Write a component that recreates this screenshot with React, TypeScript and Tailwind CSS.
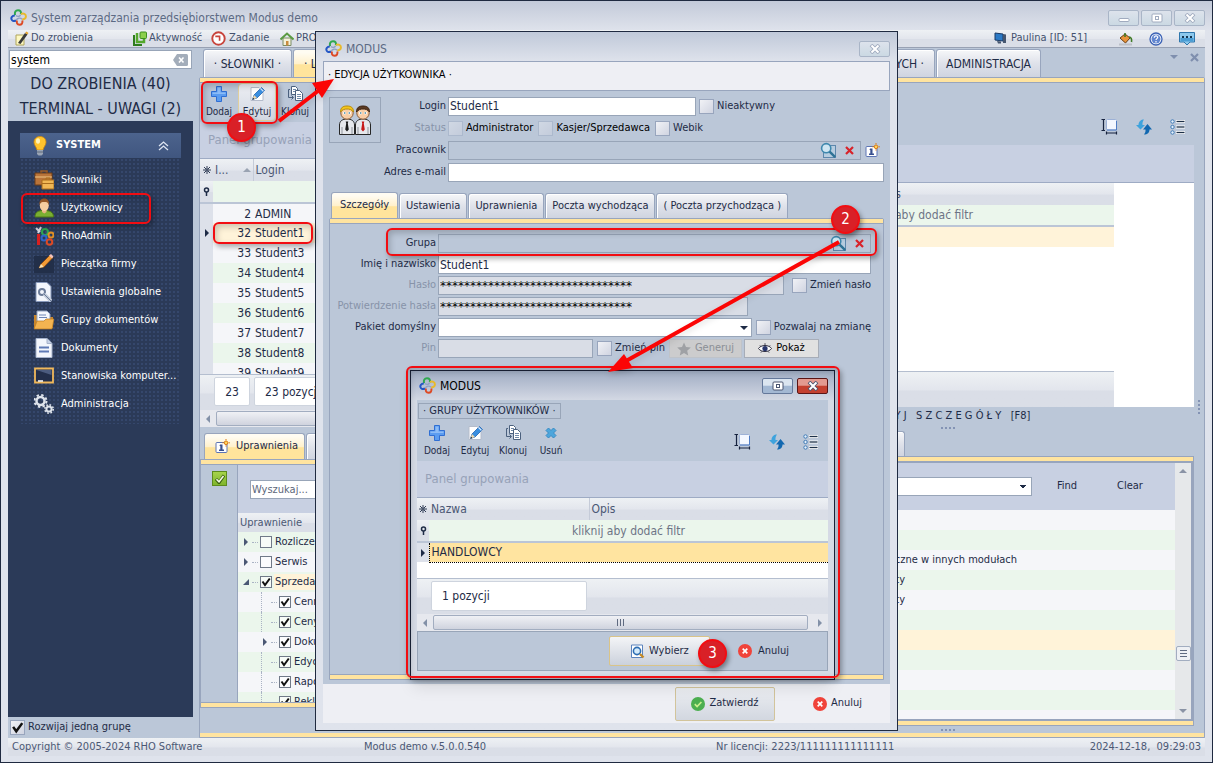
import type { ReactNode } from "react";
import { useId } from "react";
import clsx from "clsx";

const HEAD = "bg-linear-to-b from-[#eef1f4] via-[#e3e6ed] via-50% to-[#dadee7] to-55%";
const TAB = "border border-b-0 border-[#98a5bd] rounded-t-[3px] bg-linear-to-b from-[#f6f7f9] via-[#dfe2ea] to-[#cfd4e0] shadow-[inset_1px_1px_0_#fff]";
const TAB_ACTIVE = "border border-b-0 border-[#98a5bd] rounded-t-[3px] bg-linear-to-b from-[#fffcf2] from-10% via-[#fff1cd] via-50% to-[#ffe49c] to-55%";
const FIELD = "h-[19px] border border-[#98a5b8] px-px text-[12px] outline-none";

/* ---------- icons ---------- */

function Logo() {
  return (
    <svg width="17" height="17" viewBox="0 0 17 17" fill="none" strokeWidth="2" className="shrink-0">
      <path d="M5 6.200C4.500 3 5.500 1.300 8 1.300s3.500 1.500 2.800 3.900" stroke="#2fa84f" />
      <path d="M4.800 6.500C2 6.700.900 8.500 1.500 10.300S4 12.500 6 11.500" stroke="#2457c5" />
      <path d="M11 5c2.500-1 4.800 0 4.900 2.300S14 10.500 12.300 10" stroke="#e8b92c" />
      <path d="M7 11.500c-.8 2.500.3 4.200 2.500 4.200s3.500-1.500 2.800-4.200" stroke="#dd4a25" />
      <path d="M6 6.500c1.500 1.500 3.500 1 4.500-.5M6.500 11c.5-2 4-2.500 5.500-.8" stroke="#8fa0c4" strokeWidth="1.400" />
    </svg>
  );
}

function PlusIcon() {
  return (
    <svg width="18" height="18" viewBox="0 0 18 18">
      <path d="M6.500 1.500h5v5h5v5h-5v5h-5v-5h-5v-5h5z" fill="#5b9cf0" stroke="#2f6ed3" />
      <path d="M7.500 2.500h3v5h5v1.500h-13v-1.500h5z" fill="#a3cbfa" opacity=".7" />
    </svg>
  );
}

function EditIcon() {
  return (
    <svg width="18" height="18" viewBox="0 0 18 18">
      <path d="M3 2.500h8l4 4v9H3z" fill="#fff" stroke="#b5bccb" />
      <path d="M4.500 14.500l1.500-4.500 7.500-7.500 3 3-7.500 7.500z" fill="#3a8fe0" stroke="#2464b0" strokeWidth=".8" />
      <path d="M4.500 14.500l1.500-4.500 3 3z" fill="#f2d9ab" />
      <path d="M4.400 14.700l.8-2 1.200 1.200z" fill="#222" />
      <path d="M12.400 3.400l3 3" stroke="#dbe9fb" strokeWidth="1.300" />
    </svg>
  );
}

function CloneIcon() {
  return (
    <svg width="18" height="18" viewBox="0 0 18 18" fill="none">
      <path d="M5.500 1.500h4l2 2v6h-6z" fill="#fff" stroke="#4b607d" />
      <path d="M7 4.500h3M7 6.500h3" stroke="#7189a8" />
      <path d="M9.500 5.500h4l3 3v7h-7z" fill="#fff" stroke="#4b607d" />
      <path d="M11 9.500h4M11 11.500h4M11 13.500h4" stroke="#7189a8" />
      <path d="M4 4.500H2.500v8H7M5.500 10.500l2 2-2 2" stroke="#4b607d" />
    </svg>
  );
}

function CrossIcon() {
  return (
    <svg width="18" height="18" viewBox="0 0 18 18">
      <path d="M4 6.500L6.500 4 9 6.500 11.500 4 14 6.500 11.500 9l2.500 2.500-2.500 2.500L9 11.500 6.500 14 4 11.500 6.500 9z" fill="#4da6dc" stroke="#388bc4" strokeLinejoin="round" />
    </svg>
  );
}

function SizeIcon() {
  return (
    <svg width="17" height="17" viewBox="0 0 17 17" fill="none">
      <rect x="5.500" y="1.500" width="10" height="10.500" rx="1" fill="#f3f7ff" stroke="#9db1d6" />
      <path d="M6 12h9.500V3" stroke="#4f7cc4" />
      <path d="M.5 1.500h3.500M2.500 1.500v11M.5 12.500h3.500M5.500 13.500v3M15.500 13.500v3M5.500 15h10" stroke="#16233f" strokeWidth="1.200" />
    </svg>
  );
}

function RefreshIcon() {
  return (
    <svg width="16" height="16" viewBox="0 0 16 16">
      <path d="M8 .5C5 .5 2.500 2.500 2.500 6H0l4.500 4.500L9 6H6.500C6.300 4 6.800 2 8 .5z" fill="#3ea3dd" />
      <path d="M8 15.500c3.500 0 5.500-2 5.500-5H16L11.500 5 7 10.500h2.500c.2 2-.3 3.500-1.500 5z" fill="#1268b0" />
    </svg>
  );
}

function ListIcon() {
  return (
    <svg width="16" height="16" viewBox="0 0 16 16" fill="none">
      {[2.5, 8, 13.5].map((y) => (
        <g key={y}>
          <circle cx="2.500" cy={y} r="1.700" fill="#e5f1fc" stroke="#3f7ab5" />
          <path d={`M6 ${y}h9`} stroke="#fff" strokeWidth="3" />
          <path d={`M6.500 ${y}h8`} stroke="#1d3048" strokeWidth="1.300" />
        </g>
      ))}
    </svg>
  );
}

function CardIcon() {
  return (
    <svg width="15" height="15" viewBox="0 0 15 15">
      <rect x="1" y="3.500" width="11" height="10" rx="1" fill="#fff" stroke="#5c74b5" />
      <path d="M5 5.500h2.500v5H9v1.500H4v-1.500h1.300V7H4.500z" fill="#39508f" />
      <circle cx="11" cy="3.800" r="1.800" fill="#ffd45b" stroke="#dd7b13" />
      <path d="M11 0v1.300M11 6.300v1.300M7.300 3.800h1.200M13.500 3.800h1.400" stroke="#dd7b13" />
    </svg>
  );
}

function LookupIcon() {
  return (
    <svg width="17" height="17" viewBox="0 0 17 17" fill="none">
      <rect x="3.500" y="3.500" width="12" height="12" fill="#b7cde0" stroke="#5d87ac" />
      <circle cx="6.200" cy="6.200" r="4.600" fill="#cfe6f3" stroke="#3f88ae" strokeWidth="1.600" />
      <path d="M9.600 9.600l5.600 5.600" stroke="#2f7396" strokeWidth="2.400" />
    </svg>
  );
}

function RedX() {
  return (
    <svg width="9" height="9" viewBox="0 0 9 9">
      <path d="M1 1l7 7M8 1l-7 7" stroke="#d8232a" strokeWidth="2.200" />
    </svg>
  );
}

function CancelIcon() {
  return (
    <svg width="14" height="14" viewBox="0 0 14 14">
      <circle cx="7" cy="7" r="7" fill="#f0433a" />
      <path d="M4.700 4.700l4.600 4.600M9.300 4.700l-4.600 4.600" stroke="#fff" strokeWidth="1.700" />
    </svg>
  );
}

function OkIcon() {
  return (
    <svg width="14" height="14" viewBox="0 0 14 14">
      <circle cx="7" cy="7" r="7" fill="#4caf50" />
      <path d="M3.800 7.200l2.300 2.300 4.300-4.500" fill="none" stroke="#c9f08e" strokeWidth="1.700" />
    </svg>
  );
}

function UsersIcon() {
  return (
    <svg width="34" height="34" viewBox="0 0 34 34">
      {[0, 16].map((x) => (
        <g key={x} transform={`translate(${x} 2)`}>
          <path d="M1.500 29.500V20c0-4 3-6 7.500-6s7.500 2 7.500 6v9.500z" fill="#e6e8ec" stroke="#262626" />
          <circle cx="9" cy="8" r="6.200" fill="#f9cfa8" stroke="#8d5c36" />
          <path d="M2.500 7C2.500 2.500 5 1 9 1s6.500 1.500 6.500 6c-2-2.500-4-3-6.500-3s-4.500.5-6.500 3z" fill={x ? "#5b3a22" : "#f3c51c"} stroke={x ? "#3d2515" : "#b78b0b"} />
          <circle cx="6.500" cy="8" r="1.500" fill="#fff" />
          <circle cx="11.500" cy="8" r="1.500" fill="#fff" />
          <circle cx="6.700" cy="8" r=".8" fill="#1d6d8c" />
          <circle cx="11.300" cy="8" r=".8" fill="#1d6d8c" />
          <path d="M7.700 16.500h2.600l-.5 2 1 6-1.800 2-1.800-2 1-6z" fill={x ? "#c61a1a" : "#1c1c1c"} />
          <path d="M4 29v-7M14 29v-7" stroke="#8f949c" />
        </g>
      ))}
    </svg>
  );
}

function BulbIcon() {
  return (
    <svg width="16" height="20" viewBox="0 0 16 20">
      <path d="M8 .5c4 0 6 2.600 6 5.800 0 3-2.500 4.700-3 7.700H5c-.5-3-3-4.700-3-7.700C2 3.100 4 .5 8 .5z" fill="#ffc32d" stroke="#c98711" strokeWidth=".8" />
      <ellipse cx="6" cy="5" rx="2" ry="2.800" fill="#fff3b8" />
      <path d="M5 14h6v4l-1.500 1.500h-3L5 18z" fill="#9aa5b5" />
      <path d="M5 16h6" stroke="#5f6b7c" />
    </svg>
  );
}

const navIcons: Record<string, ReactNode> = {
  case: (
    <>
      <path d="M7 3V1h6v2" fill="none" stroke="#9d5b22" strokeWidth="1.500" />
      <path d="M1 3h17v12H1z" fill="#b9743a" stroke="#6d3d16" />
      <path d="M1 7h17" stroke="#f0c684" />
      <path d="M8 10h12v9H8z" fill="#f0b755" stroke="#a96c1b" />
      <path d="M12 9.500v-1.500h4v1.500M8 13.500h12" fill="none" stroke="#a96c1b" />
    </>
  ),
  user: (
    <>
      <path d="M1 19c0-5 3-6.500 9-6.500s9.500 1.500 9.500 6.500z" fill="#7ab032" stroke="#4e7a16" />
      <path d="M8 11h4.500v3l-2.200 1.500L8 14z" fill="#e9b583" />
      <ellipse cx="10.300" cy="7.500" rx="4.500" ry="5.500" fill="#f6cda0" />
      <path d="M5.500 7c-.5-4 1.500-6.500 4.800-6.500S15.500 3 15 7c-1-2.500-2-3-4.700-3S6.500 4.500 5.500 7z" fill="#9a5a2a" />
    </>
  ),
  admin: (
    <>
      <path d="M2 2l4 4M7 1L4 7" stroke="#d5dae3" strokeWidth="2" />
      <path d="M3 8h3v11H3z" fill="#d82020" />
      <circle cx="11" cy="6" r="3" fill="none" stroke="#2fa84f" strokeWidth="2" />
      <circle cx="17" cy="9" r="2.500" fill="none" stroke="#e08f25" strokeWidth="2" />
      <circle cx="10" cy="12" r="2.500" fill="none" stroke="#2f66c9" strokeWidth="2" />
      <circle cx="15.500" cy="16" r="2.800" fill="none" stroke="#dd4a25" strokeWidth="2" />
    </>
  ),
  stamp: (
    <>
      <path d="M0 2h20v17H0z" fill="#222f49" />
      <path d="M5 14l2-4L16 1l3 2.500-9 9.500z" fill="#f39b35" stroke="#7d4310" strokeWidth=".8" />
      <path d="M5 14l2-4 2.800 3z" fill="#fbe3b3" />
      <path d="M15 1.500l2-1.500 2.500 2.500-1.500 2z" fill="#f3c4bd" />
    </>
  ),
  globalSettings: (
    <>
      <path d="M2 .5h11l4 4v15H2z" fill="#f3f6fc" stroke="#8798ba" />
      <circle cx="8" cy="10" r="3" fill="none" stroke="#6c7c98" strokeWidth="2" />
      <path d="M10 12l7 7" stroke="#c3ccda" strokeWidth="3.500" />
      <path d="M10 12l7 7" stroke="#6c7c98" strokeWidth="1" />
    </>
  ),
  folder: (
    <>
      <path d="M0 5h8l2 2h9v11H0z" fill="#c9862b" />
      <path d="M3 1h10l3 3v9H3z" fill="#f5f8fd" stroke="#8fa0c0" />
      <path d="M5 5h7M5 7.500h8" stroke="#6f86b5" />
      <path d="M0 19l3-8h7l2-2h8l-2 10z" fill="#f3b451" stroke="#b97a1f" strokeWidth=".7" />
    </>
  ),
  doc: (
    <>
      <path d="M2 .5h11l5 5v14H2z" fill="#f3f6fc" stroke="#a5b2cb" />
      <path d="M13 .5v5h5" fill="#c7d2e6" stroke="#a5b2cb" />
      <path d="M5 9.500h10M5 13.500h10" stroke="#5f7ab5" strokeWidth="2" />
    </>
  ),
  board: (
    <>
      <path d="M1 2.500h18v14H1z" fill="#232f4b" stroke="#f0b85b" strokeWidth="1.800" />
      <path d="M2.500 4h15v5z" fill="#4c5c7f" />
      <path d="M4 15h5" stroke="#fff" strokeWidth="1.500" />
    </>
  ),
  gears: (
    <>
      <circle cx="6.500" cy="7" r="4" fill="none" stroke="#dfe4ec" strokeWidth="2.500" />
      <circle cx="6.500" cy="7" r="6" fill="none" stroke="#dfe4ec" strokeWidth="2" strokeDasharray="2.360 2.360" />
      <circle cx="15" cy="15" r="2.600" fill="none" stroke="#dfe4ec" strokeWidth="2" />
      <circle cx="15" cy="15" r="4.200" fill="none" stroke="#dfe4ec" strokeWidth="1.600" strokeDasharray="1.650 1.650" />
    </>
  ),
};

/* ---------- shared controls ---------- */

type CheckProps = { label: string; checked?: boolean; disabled?: boolean; small?: boolean; bold?: boolean };

function Check({ label, checked, disabled, small, bold }: CheckProps) {
  const id = useId();
  return (
    <span className="flex items-center gap-[3px] whitespace-nowrap">
      <span className="relative flex">
        <input
          id={id}
          type="checkbox"
          defaultChecked={checked}
          disabled={disabled}
          className={clsx(
            "peer appearance-none border",
            small ? "size-3 border-[#707988] bg-white/60" : "size-[15px] border-[#98a5bd] bg-linear-to-br from-[#f1f2f6] to-[#d0d4e1]",
            disabled && "opacity-40",
          )}
        />
        <svg viewBox="0 0 12 12" className="pointer-events-none absolute inset-0 m-auto hidden size-full peer-checked:block">
          <path d="M2.500 5.500l2.500 3.500 4.800-6.500" fill="none" stroke="#111" strokeWidth="2" />
        </svg>
      </span>
      <label htmlFor={id} className={bold ? "text-black" : ""}>{label}</label>
    </span>
  );
}

function ToolButton({ icon, label, active }: { icon: ReactNode; label: string; active?: boolean }) {
  return (
    <button
      className={clsx(
        "flex h-[38px] w-[38px] flex-col items-center justify-between rounded-sm border pt-px text-[10px] leading-4",
        active ? "border-[#e0cf9e] bg-linear-to-b from-[#eceef3] to-[#d3d8e2]" : "border-transparent",
      )}
    >
      {icon}
      {label}
    </button>
  );
}

function ViewTools() {
  return (
    <div className="flex items-center gap-[18px]">
      <button aria-label="Rozmiar"><SizeIcon /></button>
      <button aria-label="Odśwież"><RefreshIcon /></button>
      <button aria-label="Lista"><ListIcon /></button>
    </div>
  );
}

function WinButton({ kind, tone = "dim" }: { kind: "min" | "max" | "close"; tone?: "dim" | "blue" | "red" }) {
  return (
    <button
      aria-label={kind}
      className={clsx(
        "flex h-4 w-[31px] items-center justify-center rounded-xs border",
        tone === "dim" && "border-[#a9b5c7] bg-linear-to-b from-[#dde3ec] to-[#cbd9e3]",
        tone === "blue" && "border-[#64789a] bg-linear-to-b from-[#dbe5f0] from-45% to-[#a3b8d3] to-50%",
        tone === "red" && "border-[#5b1515] bg-linear-to-b from-[#e39a90] from-45% to-[#c4402f] to-50%",
      )}
    >
      <svg width="12" height="10" viewBox="0 0 12 10" fill="none" stroke={tone === "dim" ? "#a0abbf" : "#4a5570"}>
        {kind === "min" && <rect x="1" y="5.500" width="10" height="3" rx="1" fill="#fff" />}
        {kind === "max" && (
          <>
            <rect x="1" y="1" width="10" height="8" rx="1" fill="#fff" />
            <rect x="4.500" y="3.500" width="3" height="3" />
          </>
        )}
        {kind === "close" && (
          <>
            <path d="M2 1l8 8M10 1L2 9" strokeWidth="3.800" />
            <path d="M2.500 1.500l7 7M9.500 1.500l-7 7" stroke="#fff" strokeWidth="2" />
          </>
        )}
      </svg>
    </button>
  );
}

function Tri({ dir, className }: { dir: "left" | "right" | "up" | "down"; className?: string }) {
  const d = { left: "M6 0v8L2 4z", right: "M2 0v8l4-4z", up: "M0 6h8L4 2z", down: "M0 2h8L4 6z" }[dir];
  return (
    <svg width="8" height="8" viewBox="0 0 8 8" className={clsx("shrink-0", className)}>
      <path d={d} fill="currentColor" />
    </svg>
  );
}

function FilterPin() {
  return (
    <svg width="7" height="9" viewBox="0 0 7 9" className="mx-auto">
      <circle cx="3.500" cy="3" r="2" fill="none" stroke="#1e2b46" strokeWidth="1.500" />
      <path d="M3.500 5v4" stroke="#1e2b46" strokeWidth="1.500" />
    </svg>
  );
}

function StarMark() {
  return (
    <svg width="8" height="8" viewBox="0 0 8 8" className="mx-auto" stroke="#1e2b46" strokeWidth=".9">
      <path d="M4 0v8M0 4h8M1 1l6 6M7 1L1 7" />
      <circle cx="4" cy="4" r="1" fill="#e6e9ef" />
    </svg>
  );
}

function HScroll() {
  return (
    <div className="flex h-[17px] items-center gap-1 bg-[#e6e8ee] px-1 text-[#8391a8]">
      <Tri dir="left" />
      <div className="flex h-[15px] flex-1 items-center justify-center gap-0.5 rounded-xs border border-[#a2adc0] bg-linear-to-b from-[#f0f1f5] to-[#cfd3de]">
        {[0, 1, 2].map((i) => (
          <span key={i} className="h-[7px] w-px bg-[#5f6a80]" />
        ))}
      </div>
      <Tri dir="right" className="ml-1" />
    </div>
  );
}

function Dots({ vertical }: { vertical?: boolean }) {
  return (
    <div className={clsx("flex gap-0.5", vertical && "flex-col")}>
      {[0, 1, 2, 3].map((i) => (
        <span key={i} className="size-0.5 bg-[#8393b4]" />
      ))}
    </div>
  );
}

/* ---------- main window ---------- */

function TopBar() {
  return (
    <header>
      <div className="flex h-[29px] items-center gap-1 pt-1 pl-0.5 text-[#5c6a84]">
        <Logo />
        <h1 className="flex-1 text-[12px]">System zarządzania przedsiębiorstwem Modus demo</h1>
        <div className="flex gap-0.5">
          <WinButton kind="min" />
          <WinButton kind="max" />
          <WinButton kind="close" />
        </div>
      </div>
      <div className={clsx("flex h-[18px] items-center border-b border-[#98a1b3] text-[#44526e]", HEAD)}>
        <button className="flex w-[119px] items-center gap-0.5 pl-1.5">
          <svg width="15" height="15" viewBox="0 0 15 15">
            <path d="M2 4h8v10H2z" fill="#fdf8c2" stroke="#b0a55b" />
            <path d="M4 12L11 2l2.500 1.500L6.500 13z" fill="#3a3a3a" />
            <path d="M11 2l1.500-1.500L14.500 2l-1 1.500z" fill="#e7a52c" />
          </svg>
          Do zrobienia
        </button>
        <button className="flex w-[78px] items-center gap-0.5 pl-1.5">
          <svg width="14" height="15" viewBox="0 0 14 15" className="shrink-0">
            <path d="M1 4v10h8" fill="none" stroke="#2e7d1d" strokeWidth="2" />
            <path d="M4 2v9h7V7" fill="none" stroke="#54a82c" strokeWidth="2.500" />
            <rect x="7" y="1" width="6.500" height="6.500" rx="1" fill="#8ccf4d" stroke="#3d8f1f" />
          </svg>
          Aktywność
        </button>
        <button className="flex w-[69px] items-center gap-[3px] pl-1.5">
          <svg width="15" height="15" viewBox="0 0 14 14" className="shrink-0">
            <circle cx="7" cy="7" r="5.800" fill="#fff" stroke="#c8443c" strokeWidth="1.800" />
            <path d="M4 5h4v4" fill="none" stroke="#c8443c" strokeWidth="1.500" />
          </svg>
          Zadanie
        </button>
        <button className="flex items-center gap-0.5 pl-1.5">
          <svg width="14" height="14" viewBox="0 0 14 14">
            <path d="M3 6h8v7.500H3z" fill="#f4f1d8" stroke="#7a8c66" />
            <path d="M.5 7.500L7 1.500l6.500 6" fill="none" stroke="#5b9a42" strokeWidth="2" />
            <path d="M6 9h2.500v4.500H6z" fill="#c98b3f" />
          </svg>
          PRO
        </button>
        <div className="flex-1" />
        <button className="flex w-[112px] items-center gap-1">
          <svg width="13" height="13" viewBox="0 0 13 13">
            <path d="M1 1l8 1v7L1 8z" fill="#2c7ac6" stroke="#1a3a66" />
            <path d="M9 2l3 .5V11H9zM3 9l4 .5v2H4z" fill="#46566f" />
          </svg>
          Paulina [ID: 51]
        </button>
        <div className="flex gap-4 pr-2.5 pl-3">
          <button aria-label="Kolor">
            <svg width="15" height="14" viewBox="0 0 15 14">
              <path d="M2 6l5-4 5 4-4.500 5z" fill="#e8933a" stroke="#6b3d12" />
              <path d="M7 1v4M11 5c2 0 3 2 2.500 5" fill="none" stroke="#3f7a26" strokeWidth="1.600" />
              <path d="M1 12.500h13" stroke="#bcc0c8" strokeWidth="2" />
            </svg>
          </button>
          <button aria-label="Pomoc">
            <svg width="14" height="14" viewBox="0 0 14 14" fill="none">
              <circle cx="7" cy="7" r="6" fill="#fff" stroke="#3b62b5" strokeWidth="1.300" />
              <circle cx="7" cy="7" r="4.500" fill="#6286cf" />
              <path d="M5.300 5.800c0-2.600 3.600-2.300 3.400-.3-.1 1.100-1.700 1.200-1.700 2.600M7 9v1.500" stroke="#fff" strokeWidth="1.200" />
            </svg>
          </button>
          <button aria-label="Wiadomości">
            <svg width="16" height="14" viewBox="0 0 16 14">
              <path d="M.5.500h15v9.500H11l-3 3-3-3H.5z" fill="#8cc8ec" stroke="#2f77ad" />
              <path d="M1.500 6h13v3.500h-13z" fill="#4b9dd4" />
              <path d="M3 5h2M7 5h2M11 5h2" stroke="#14344f" strokeWidth="2" />
            </svg>
          </button>
        </div>
      </div>
    </header>
  );
}

const navItems = [
  { icon: "case", label: "Słowniki" },
  { icon: "user", label: "Użytkownicy" },
  { icon: "admin", label: "RhoAdmin" },
  { icon: "stamp", label: "Pieczątka firmy" },
  { icon: "globalSettings", label: "Ustawienia globalne" },
  { icon: "folder", label: "Grupy dokumentów" },
  { icon: "doc", label: "Dokumenty" },
  { icon: "board", label: "Stanowiska komputer..." },
  { icon: "gears", label: "Administracja" },
];

function Sidebar() {
  return (
    <aside className="flex w-[185px] shrink-0 flex-col">
      <div className="relative mx-px mt-0.5 flex">
        <input aria-label="Szukaj w menu" defaultValue="system" className={clsx(FIELD, "w-full bg-white text-black")} />
        <button aria-label="Wyczyść" className="absolute top-1 right-1">
          <svg width="15" height="12" viewBox="0 0 15 12">
            <path d="M0 6l4-6h9.500q1.500 0 1.500 1.500v9q0 1.500-1.500 1.500H4z" fill="#a3adba" />
            <path d="M6 3.500l4.500 5M10.500 3.500l-4.500 5" stroke="#fff" strokeWidth="1.600" />
          </svg>
        </button>
      </div>
      <div className="flex flex-col pt-0.5 text-center text-base leading-[25px]">
        <a href="#todo">DO ZROBIENIA (40)</a>
        <a href="#terminal">TERMINAL - UWAGI (2)</a>
      </div>
      <nav className="flex-1 bg-[#2b3a58] px-3 pt-3">
        <button className="flex h-[25px] w-full items-center bg-linear-to-b from-[#4c638d] to-[#40567f] px-3 font-bold text-white">
          <BulbIcon />
          <span className="ml-2 flex-1 text-left">SYSTEM</span>
          <svg width="11" height="10" viewBox="0 0 11 10" fill="none" stroke="#dfe6f3" strokeWidth="1.300">
            <path d="M1 5l4.500-4L10 5M1 9l4.500-4L10 9" />
          </svg>
        </button>
        <ul className="bg-[radial-gradient(#35476c_1px,transparent_1px)] bg-size-[4px_4px] pt-2 pb-1.5 text-white">
          {navItems.map((item) => (
            <li key={item.label}>
              <a href={`#${item.icon}`} className="flex h-7 items-center gap-[7px] pl-3.5 whitespace-nowrap">
                <svg width="20" height="20" viewBox="0 0 20 20" className="shrink-0">
                  {navIcons[item.icon]}
                </svg>
                {item.label}
              </a>
            </li>
          ))}
        </ul>
      </nav>
      <div className="flex h-[21px] items-center pl-0.5">
        <Check label="Rozwijaj jedną grupę" checked />
      </div>
    </aside>
  );
}

const logins = [
  [2, "ADMIN"],
  [32, "Student1"],
  [33, "Student3"],
  [34, "Student4"],
  [35, "Student5"],
  [36, "Student6"],
  [37, "Student7"],
  [38, "Student8"],
  [39, "Student9"],
];

const permissions = [
  { label: "Rozliczenia", arrow: "right", level: 0, checked: false },
  { label: "Serwis", arrow: "right", level: 0, checked: false },
  { label: "Sprzedaż", arrow: "open", level: 0, checked: true },
  { label: "Cennik", level: 1, checked: true },
  { label: "Ceny", level: 1, checked: true },
  { label: "Dokumenty", arrow: "right", level: 1, checked: true },
  { label: "Edycja", level: 1, checked: true },
  { label: "Raporty", level: 1, checked: true },
  { label: "Reklamacje", level: 1, checked: true },
];

function UsersPane() {
  return (
    <section className="flex min-w-0 flex-1 flex-col">
      <div className="flex h-[39px] items-start">
        <ToolButton icon={<PlusIcon />} label="Dodaj" />
        <ToolButton icon={<EditIcon />} label="Edytuj" active />
        <ToolButton icon={<CloneIcon />} label="Klonuj" />
      </div>
      <p className="h-9 bg-[#c8d0e2] pl-2 text-[13px] leading-9 text-[#97a2b8]">Panel grupowania</p>
      <div className="h-[216px] overflow-hidden border-t border-[#9eabc4] bg-white">
        <table className="w-full table-fixed text-[12px]">
          <colgroup>
            <col className="w-[13px]" />
            <col className="w-10" />
            <col />
          </colgroup>
          <thead>
            <tr className={clsx("h-[22px] text-left text-[#4b5874]", HEAD)}>
              <th><StarMark /></th>
              <th className="font-normal">
                <span className="flex items-center justify-between px-0.5">
                  I... <Tri dir="up" className="text-[#9aa3b2]" />
                </span>
              </th>
              <th className="border-l border-[#c5cbd8] pl-0.5 font-normal">Login</th>
            </tr>
            <tr className="h-[22px] border-b-2 border-[#bbc5d6] bg-[#ebf6ec]">
              <td className={HEAD}><FilterPin /></td>
              <td colSpan={2} />
            </tr>
          </thead>
          <tbody>
            {logins.map(([id, name], i) => (
              <tr key={id} className={clsx("h-5", i === 1 ? "bg-[#fff3d9]" : i > 1 && i % 2 ? "bg-[#ebf6ec]" : "bg-[#f5f6f9]")}>
                <td className="bg-[#dde1ea]">{i === 1 && <Tri dir="right" className="mx-auto" />}</td>
                <td className="pr-0.5 text-right">{id}</td>
                <td className="pl-0.5">{name}</td>
              </tr>
            ))}
          </tbody>
        </table>
      </div>
      <div className={clsx("flex h-9 gap-1 border-t border-[#b4becf] px-3.5 pt-0.5 text-[12px] whitespace-nowrap", HEAD)}>
        <span className="flex h-[29px] w-9 items-center justify-center rounded-xs border border-[#ced4de] bg-white">23</span>
        <span className="flex h-[29px] w-40 items-center rounded-xs border border-[#ced4de] bg-white pl-2.5">23 pozycji</span>
      </div>
      <HScroll />
      <div className="mt-1.5 flex h-[26px] gap-px pl-1">
        <button className={clsx("flex w-[101px] items-center gap-1.5 pl-2.5", TAB_ACTIVE)}>
          <CardIcon /> Uprawnienia
        </button>
        <button className={clsx("w-24 pl-2 text-left", TAB)}>( Role )</button>
      </div>
      <div className="flex min-h-0 flex-1 flex-col border border-[#98a5bd]">
        <div className="h-1 bg-[#ffe4a0]" />
        <div className="flex min-h-0 flex-1 border-y border-[#98a5bd]">
          <div className="w-9 pt-1.5 pl-[11px]">
            <button aria-label="Zaznacz wszystko" className="flex size-[15px] items-center justify-center border border-[#5d8c1e] bg-linear-to-b from-[#a6d34b] to-[#7fb52c]">
              <svg width="10" height="10" viewBox="0 0 10 10" fill="none">
                <path d="M1 5l3 3.500L9 1.500" stroke="#3b6112" strokeWidth="3.200" />
                <path d="M1.500 5.200l2.500 2.500L8.500 2" stroke="#f4fbe4" strokeWidth="1.600" />
              </svg>
            </button>
          </div>
          <div className="min-w-0 flex-1 overflow-hidden border-l border-[#98a5bd]">
            <div className="flex h-12 items-center bg-[#c8d0e2] pl-3">
              <input aria-label="Wyszukaj" placeholder="Wyszukaj..." className={clsx(FIELD, "w-52 bg-white placeholder:text-[11px] placeholder:text-[#5c667a]")} />
            </div>
            <div className={clsx("h-[19px] pl-0.5 leading-[19px] text-[#4b5874]", HEAD)}>Uprawnienie</div>
            <ul>
              {permissions.map((p, i) => (
                <li key={p.label} className={clsx("flex h-5 items-center gap-1.5 pl-1", i % 2 ? "bg-[#f5f6f9]" : "bg-[#ebf6ec]", p.level === 1 && "pl-[23px]")}>
                  {p.arrow === "right" && <Tri dir="right" className="text-[#4b5874]" />}
                  {p.arrow === "open" && (
                    <svg width="8" height="8" viewBox="0 0 8 8"><path d="M7 1v6H1z" fill="#4b5874" /></svg>
                  )}
                  {!p.arrow && <span className="h-5 w-2 border-l border-dotted border-[#aab3c4]" />}
                  <span className="-mx-1 w-1.5 border-t border-dotted border-[#aab3c4]" />
                  <span className={clsx("flex-1", p.arrow === "open" && "bg-linear-to-r from-transparent from-[14px] to-[#fff3d9] to-[14px]")}>
                    <Check label={p.label} checked={p.checked} small />
                  </span>
                </li>
              ))}
            </ul>
          </div>
        </div>
        <div className="h-1 bg-[#ffe4a0]" />
      </div>
      <div className="h-[25px]" />
    </section>
  );
}

const detailRows = ["", "", "Operacje zbiorcze, widoczne w innych modułach", "Dokumenty", "Raporty", "", "", "", "", "", ""];

function DetailsPane() {
  return (
    <section className="flex min-w-0 flex-1 flex-col pl-2">
      <div className="flex h-[62px] items-end justify-end pr-2 pb-2.5">
        <ViewTools />
      </div>
      <div className="h-[37px] bg-[#c8d0e2]" />
      <div className="flex h-[225px] border-t border-[#9eabc4] bg-white">
        <div className="flex flex-1 flex-col text-[12px]">
          <div className={clsx("h-[22px] leading-[22px] text-[#4b5874]", HEAD)}>
            <span className="block w-[200px] text-right">Opis</span>
          </div>
          <div className="h-[22px] border-b-2 border-[#bbc5d6] bg-[#ebf6ec] leading-5 text-[#6d7486]">
            <span className="block w-[272px] text-right">kliknij aby dodać filtr</span>
          </div>
          <div className="h-5 bg-[#fff3d9]" />
          <div className="flex-1" />
          <div className={clsx("h-9 border-t border-[#b4becf]", HEAD)} />
        </div>
        <div className="w-20" />
      </div>
      <div className="flex h-6 flex-col items-center gap-0.5 pt-px">
        <p className="whitespace-pre">{"U K R Y J   S Z C Z E G Ó Ł Y   [F8]"}</p>
        <Dots />
      </div>
      <div className="flex h-[25px]">
        <button aria-label="Role" className={clsx("w-[204px]", TAB)} />
      </div>
      <div className="flex min-h-0 flex-1 flex-col border border-[#98a5bd]">
        <div className="h-1 bg-[#ffe4a0]" />
        <div className="flex min-h-0 flex-1 border-2 border-[#98a5bd]">
          <div className="min-w-0 flex-1 overflow-hidden">
            <div className="flex h-[47px] items-center justify-end bg-[#c8d0e2] pr-[17px]">
              <select aria-label="Szukaj" className="h-[19px] w-72 appearance-none border border-[#98a5b8] bg-white bg-[linear-gradient(45deg,transparent_50%,#1e2b46_50%),linear-gradient(-45deg,transparent_50%,#1e2b46_50%)] bg-size-[4px_4px] bg-position-[right_8px_center,right_4px_center] bg-no-repeat" />
              <button className="w-[70px]">Find</button>
              <button className="w-14">Clear</button>
            </div>
            <ul>
              {detailRows.map((text, i) => (
                <li key={i} className={clsx("h-5 leading-5 whitespace-nowrap", i === 6 ? "bg-[#fff3d9]" : i % 2 ? "bg-[#ebf6ec]" : "bg-[#f5f6f9]")}>
                  <span className={clsx("block text-right", i === 2 ? "w-[313px]" : "w-[201px]")}>{text}</span>
                </li>
              ))}
            </ul>
          </div>
          <div className="flex w-4 flex-col items-center justify-between bg-[#e6e8ea] py-1 text-[#8a93a5]">
            <Tri dir="up" />
            <div className="flex-1" />
            <div className="flex size-[15px] flex-col items-center justify-center gap-0.5 rounded-xs border border-[#a2adc0] bg-[#eef0f4]">
              {[0, 1, 2].map((i) => (
                <span key={i} className="h-px w-[7px] bg-[#5f6a80]" />
              ))}
            </div>
            <div className="h-[46px]" />
            <Tri dir="down" />
          </div>
        </div>
        <div className="h-1 bg-[#ffe4a0]" />
      </div>
      <div className="flex h-[7px] items-center justify-center"><Dots /></div>
    </section>
  );
}

function Workspace() {
  return (
    <main className="flex min-w-0 flex-1 flex-col">
      <div className="flex h-[29px] items-stretch gap-px pt-px pl-1 text-[12px] whitespace-nowrap">
        <button className={clsx("w-[89px]", TAB)}>· SŁOWNIKI ·</button>
        <button className={clsx("w-[300px] pl-2.5 text-left", TAB_ACTIVE)}>· LOGINY ·</button>
        <button className={clsx("w-[341px] pr-2.5 text-right", TAB)}>· LISTA DANYCH ·</button>
        <button className={clsx("w-[105px]", TAB)}>ADMINISTRACJA</button>
        <div className="flex flex-1 items-start justify-end gap-3 pt-1 pr-1.5 text-[#7f8fae]">
          <Tri dir="down" />
          <svg width="9" height="9" viewBox="0 0 9 9"><path d="M1 1l7 7M8 1l-7 7" stroke="currentColor" strokeWidth="2.200" /></svg>
        </div>
      </div>
      <div className="flex min-h-0 flex-1 flex-col rounded-t-xs border border-[#98a5bd]">
        <div className="h-1 bg-[#ffe4a0]" />
        <div className="flex min-h-0 flex-1 border-t border-[#98a5bd]">
          <UsersPane />
          <DetailsPane />
          <div className="flex w-[10px] justify-center pt-[317px]"><Dots vertical /></div>
        </div>
        <div className="h-1 bg-[#ffe4a0]" />
      </div>
    </main>
  );
}

/* ---------- edit dialog ---------- */

type RowProps = { label: string; dim?: boolean; wide?: boolean; children: (id: string) => ReactNode };

function FormRow({ label, dim, wide, children }: RowProps) {
  const id = useId();
  return (
    <div className={clsx("flex items-center", wide ? "h-[22px]" : "h-[21px]")}>
      <label htmlFor={id} className={clsx("shrink-0 pr-0.5 text-right whitespace-nowrap", wide ? "w-[67px]" : "w-[108px]", dim && "text-[#8793a9]")}>
        {label}
      </label>
      {children(id)}
    </div>
  );
}

function Lookup({ id }: { id: string }) {
  return (
    <div className="flex h-[19px] flex-1 items-center gap-2 border border-[#98a5b8] pr-1.5">
      <input id={id} readOnly className="min-w-0 flex-1 bg-transparent outline-none" />
      <button aria-label="Wybierz z listy"><LookupIcon /></button>
      <button aria-label="Usuń"><RedX /></button>
    </div>
  );
}

function GroupsDialog() {
  return (
    <div role="dialog" aria-label="Grupy użytkowników" className="absolute top-[369px] left-[409px] flex w-[425px] flex-col border border-[#1a2238] bg-linear-to-b from-[#a0acc3] to-[#d5dae5] to-[30px] px-1.5 pb-2 shadow-lg">
      <div className="flex h-[29px] items-center gap-1 pl-0.5 text-black">
        <Logo />
        <h2 className="flex-1 text-[12px]">MODUS</h2>
        <WinButton kind="max" tone="blue" />
        <WinButton kind="close" tone="red" />
      </div>
      <div className="bg-[#bbc7d8] px-px pt-[3px]">
        <h3 className="flex h-4 w-fit items-center border border-[#98a5b8] px-1">· GRUPY UŻYTKOWNIKÓW ·</h3>
        <div className="flex h-[42px] items-start justify-between pt-[3px] pr-2">
          <div className="flex">
            <ToolButton icon={<PlusIcon />} label="Dodaj" />
            <ToolButton icon={<EditIcon />} label="Edytuj" />
            <ToolButton icon={<CloneIcon />} label="Klonuj" />
            <ToolButton icon={<CrossIcon />} label="Usuń" />
          </div>
          <div className="self-center"><ViewTools /></div>
        </div>
      </div>
      <p className="h-9 bg-[#c8d0e2] pl-2 text-[13px] leading-9 text-[#97a2b8]">Panel grupowania</p>
      <div className="h-[81px] border-t border-[#9eabc4] bg-white">
        <table className="w-full table-fixed text-[12px]">
          <colgroup>
            <col className="w-3" />
            <col className="w-40" />
            <col />
          </colgroup>
          <thead>
            <tr className={clsx("h-[22px] text-left text-[#4b5874]", HEAD)}>
              <th><StarMark /></th>
              <th className="pl-0.5 font-normal">Nazwa</th>
              <th className="border-l border-[#c5cbd8] pl-0.5 font-normal">Opis</th>
            </tr>
            <tr className="h-[22px] border-b-2 border-[#bbc5d6] bg-[#ebf6ec]">
              <td className={HEAD}><FilterPin /></td>
              <td colSpan={2} className="text-center text-[#6d7486]">kliknij aby dodać filtr</td>
            </tr>
          </thead>
          <tbody>
            <tr className="h-5 bg-[#ffe4a0]">
              <td className="bg-[#dde1ea]"><Tri dir="right" className="mx-auto" /></td>
              <td colSpan={2} className="border-y border-l border-dotted border-black pl-0.5">HANDLOWCY</td>
            </tr>
          </tbody>
        </table>
      </div>
      <div className={clsx("h-9 border-t border-[#b4becf] px-3.5 pt-0.5 text-[12px]", HEAD)}>
        <span className="flex h-[30px] w-[156px] items-center rounded-xs border border-[#ced4de] bg-white pl-2.5">1 pozycji</span>
      </div>
      <HScroll />
      <div className="flex h-10 items-center justify-end gap-7 border border-[#98a5b8] bg-[#bbc7d8] pr-[38px]">
        <button className="flex h-[30px] w-[101px] items-center justify-center gap-1 rounded-xs border border-[#d9c489] bg-linear-to-b from-[#f4f5f7] to-[#cbd1dc]">
          <svg width="15" height="15" viewBox="0 0 15 15" fill="none">
            <path d="M1.500 1h11v12.500h-11z" fill="#fff" stroke="#5b83bd" />
            <circle cx="7" cy="7" r="3.600" fill="#d5ebfa" stroke="#2e6eb3" strokeWidth="1.600" />
            <path d="M10 10l3.500 3.500" stroke="#c58a26" strokeWidth="2.400" />
          </svg>
          Wybierz
        </button>
        <button className="flex items-center gap-1.5"><CancelIcon /> Anuluj</button>
      </div>
    </div>
  );
}

const dialogTabs = ["Ustawienia", "Uprawnienia", "Poczta wychodząca", "( Poczta przychodząca )"];

function EditDialog() {
  return (
    <div role="dialog" aria-label="Edycja użytkownika" className="absolute top-[30px] left-[314px] flex h-[700px] w-[583px] flex-col border border-[#1f2a40] bg-linear-to-b from-[#c0c9d9] to-[#dfe3ec] to-[30px] px-[7px] pb-[7px]">
      <div className="flex h-[29px] items-center gap-1 pt-1 pl-0.5 text-[#5c6a84]">
        <Logo />
        <h2 className="flex-1 text-[12px]">MODUS</h2>
        <WinButton kind="close" />
      </div>
      <h3 className="h-[30px] border border-[#98a5bd] bg-[#eeeff4] pl-1 leading-[26px] text-black">· EDYCJA UŻYTKOWNIKA ·</h3>
      <div className="flex min-h-0 flex-1 flex-col bg-[#bbc7d8] px-1.5 pt-1">
        <div className="flex">
          <div className="mt-0.5 flex h-[46px] w-[52px] shrink-0 items-center justify-center border border-[#98a5b8]">
            <UsersIcon />
          </div>
          <div className="min-w-0 flex-1">
            <FormRow label="Login" wide>
              {(id) => (
                <div className="flex items-center gap-[3px]">
                  <input id={id} defaultValue="Student1" className={clsx(FIELD, "w-[248px] bg-white")} />
                  <Check label="Nieaktywny" />
                </div>
              )}
            </FormRow>
            <div className="flex h-[22px] items-center">
              <span className="w-[67px] pr-0.5 text-right text-[#8793a9]">Status</span>
              <div className="flex items-center gap-[5px]">
                <Check label="Administrator" disabled bold />
                <Check label="Kasjer/Sprzedawca" disabled bold />
                <Check label="Webik" />
              </div>
            </div>
            <FormRow label="Pracownik" wide>
              {(id) => (
                <>
                  <Lookup id={id} />
                  <button aria-label="Nowy pracownik" className="px-1"><CardIcon /></button>
                </>
              )}
            </FormRow>
            <FormRow label="Adres e-mail" wide>
              {(id) => <input id={id} className={clsx(FIELD, "flex-1 bg-white")} />}
            </FormRow>
          </div>
        </div>
        <div className="mt-[9px] flex h-[26px] items-end gap-px px-0.5">
          <button className={clsx("h-[26px] w-[67px]", TAB_ACTIVE)}>Szczegóły</button>
          {dialogTabs.map((t) => (
            <button key={t} className={clsx("h-[25px] px-1.5 whitespace-nowrap", TAB)}>{t}</button>
          ))}
        </div>
        <div className="mb-1 flex min-h-0 flex-1 flex-col rounded-t-xs border border-[#98a5bd]">
          <div className="h-1 bg-[#ffe4a0]" />
          <div className="flex-1 border-y border-[#98a5bd] pt-[9px] pr-3">
            <FormRow label="Grupa">{(id) => <Lookup id={id} />}</FormRow>
            <FormRow label="Imię i nazwisko">
              {(id) => <input id={id} defaultValue="Student1" className={clsx(FIELD, "flex-1 bg-white")} />}
            </FormRow>
            <FormRow label="Hasło" dim>
              {(id) => (
                <>
                  <input id={id} readOnly value="********************************" className={clsx(FIELD, "mr-2 min-w-0 flex-1 bg-[#d9dde6] font-['DejaVu_Sans',sans-serif] text-black")} />
                  <Check label="Zmień hasło" />
                </>
              )}
            </FormRow>
            <FormRow label="Potwierdzenie hasła" dim>
              {(id) => <input id={id} readOnly value="********************************" className={clsx(FIELD, "w-[310px] bg-[#d9dde6] font-['DejaVu_Sans',sans-serif] text-black")} />}
            </FormRow>
            <FormRow label="Pakiet domyślny">
              {(id) => (
                <>
                  <span className="relative mr-1 flex flex-1">
                    <select id={id} className="h-[19px] w-full appearance-none border border-[#98a5b8] bg-white" />
                    <Tri dir="down" className="pointer-events-none absolute top-1.5 right-1" />
                  </span>
                  <Check label="Pozwalaj na zmianę" />
                </>
              )}
            </FormRow>
            <FormRow label="Pin" dim>
              {(id) => (
                <>
                  <input id={id} readOnly className={clsx(FIELD, "mr-1 w-[155px] bg-[#d9dde6]")} />
                  <Check label="Zmień pin" />
                  <button disabled className="ml-1 flex h-[19px] w-[73px] items-center justify-center gap-1 border border-[#bfc3c9] bg-[#cccccd] text-[#8b8f96]">
                    <svg width="14" height="14" viewBox="0 0 14 14"><path d="M7 .5l2 4.500 4.800.5-3.600 3.300 1 4.700L7 11l-4.200 2.500 1-4.700L.2 5.500 5 5z" fill="#9fa1a5" /></svg>
                    Generuj
                  </button>
                  <button className="ml-0.5 flex h-[19px] w-[75px] items-center justify-center gap-1 border border-[#a7adb8] bg-[#e1e1e1] text-black">
                    <svg width="14" height="11" viewBox="0 0 14 11" fill="none">
                      <path d="M.5 5.500C3 1.500 11 1.500 13.500 5.500 11 9.500 3 9.500.5 5.500z" fill="#fff" stroke="#2b2b3d" />
                      <circle cx="7" cy="5.500" r="2.600" fill="#27356b" />
                      <path d="M2 2.500l1 1M7 .3v1.500M12 2.500l-1 1M3 9.500l.8-1M11 9.500l-.8-1" stroke="#2b2b3d" />
                    </svg>
                    Pokaż
                  </button>
                </>
              )}
            </FormRow>
          </div>
          <div className="h-1 bg-[#ffe4a0]" />
        </div>
      </div>
      <div className="flex h-[39px] items-center justify-end gap-[38px] bg-[#eeeff4] pr-7">
        <button className="flex h-[34px] w-[100px] items-center justify-center gap-1 rounded-xs border border-[#d2c49b] bg-linear-to-b from-[#eceef2] to-[#d2d7e0]">
          <OkIcon /> Zatwierdź
        </button>
        <button className="flex items-center gap-1"><CancelIcon /> Anuluj</button>
      </div>
    </div>
  );
}

/* ---------- tutorial marks over the windows ---------- */

function Marks() {
  const frame = "absolute rounded-md border-2 border-[#f20d12] shadow-[2px_3px_5px_rgba(0,0,0,.3),inset_2px_3px_6px_rgba(0,0,0,.2)]";
  const badge = "absolute flex size-[29px] items-center justify-center rounded-full border-2 border-[#f20d12] bg-[#d92027] text-[15px] text-white shadow-[2px_3px_5px_rgba(0,0,0,.4)]";
  return (
    <div className="pointer-events-none absolute inset-0">
      <div className={clsx(frame, "top-[80px] left-[200px] h-[43px] w-[77px]")} />
      <div className={clsx(frame, "top-[192px] left-[20px] h-[31px] w-[130px]")} />
      <div className={clsx(frame, "top-[221px] left-[212px] h-[22px] w-[100px]")} />
      <div className={clsx(frame, "top-[227px] left-[385px] h-[28px] w-[491px]")} />
      <div className={clsx(frame, "top-[365px] left-[405px] h-[312px] w-[434px]")} />
      <svg className="absolute top-0 left-0 drop-shadow-md" width="900" height="400" viewBox="1 1 900 400">
        <path d="M279 121L318 91" stroke="#fb0505" strokeWidth="4" />
        <path d="M334 79l-22 4 10 15z" fill="#fb0505" />
        <path d="M839 242L626 361" stroke="#fb0505" strokeWidth="4" />
        <path d="M608 372l16-18 9 14z" fill="#fb0505" />
      </svg>
      <span className={clsx(badge, "top-[112px] left-[226px]")}>1</span>
      <span className={clsx(badge, "top-[204px] left-[830px]")}>2</span>
      <span className={clsx(badge, "top-[638px] left-[697px]")}>3</span>
    </div>
  );
}

export default function App() {
  return (
    <div className="relative flex h-screen min-h-[763px] flex-col overflow-hidden border border-[#1f2a40] bg-linear-to-b from-[#c3cad9] to-[#dfe3ec] to-[30px] px-[7px] pb-[6px] font-['DejaVu_Sans_Condensed','Noto_Sans',sans-serif] text-[11px] text-[#1e2b46]">
      <TopBar />
      <div className="flex min-h-0 flex-1 gap-1.5 bg-[#bbc7d8]">
        <Sidebar />
        <Workspace />
      </div>
      <footer className={clsx("flex h-[18px] items-center text-[#4b5874]", HEAD)}>
        <span className="w-[352px] pl-1">Copyright © 2005-2024 RHO Software</span>
        <span className="w-[352px] pl-1">Modus demo v.5.0.0.540</span>
        <span className="flex-1 pl-1">Nr licencji: 2223/111111111111111</span>
        <span className="pr-1 whitespace-pre">2024-12-18,  09:29:03</span>
      </footer>
      <EditDialog />
      <GroupsDialog />
      <Marks />
    </div>
  );
}
